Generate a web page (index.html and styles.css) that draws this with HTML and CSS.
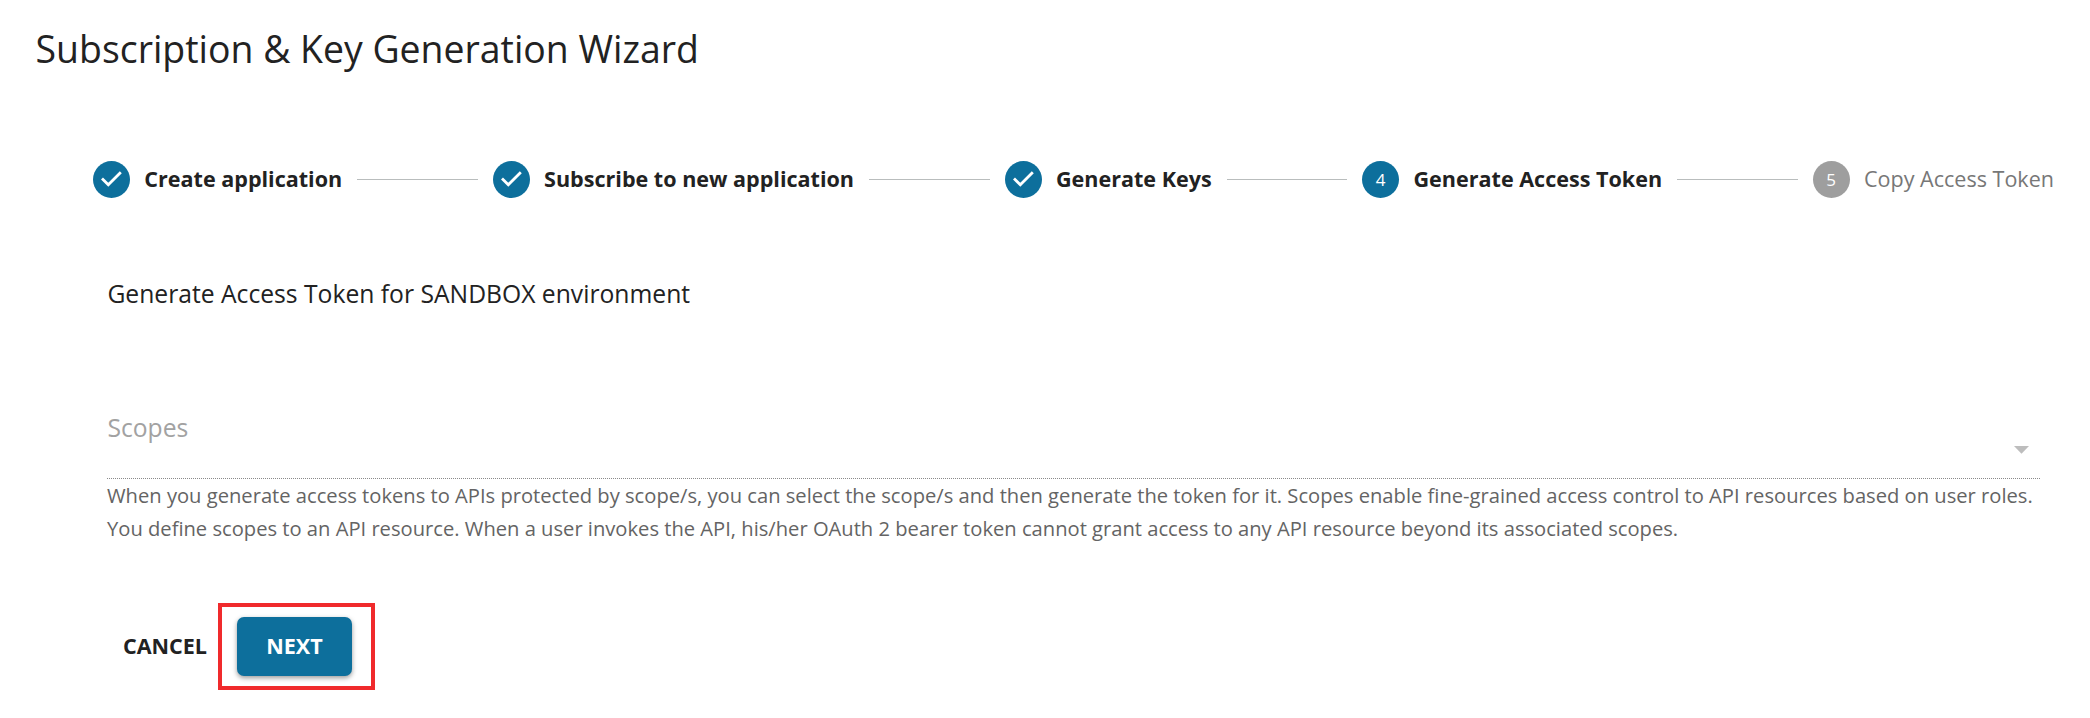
FILE: index.html
```html
<!DOCTYPE html>
<html lang="en">
<head>
<meta charset="utf-8">
<title>Subscription &amp; Key Generation Wizard</title>
<link rel="stylesheet" href="styles.css">
</head>
<body>
<main class="wizard">
  <h1 class="title">Subscription &amp; Key Generation Wizard</h1>
  <div class="stepper">
    <div class="step"><svg class="badge" viewBox="0 0 37 37"><circle cx="18.5" cy="18.5" r="18.5"/><path d="M9 17.4 15.3 23.7 27.8 11.2"/></svg><span class="label">Create application</span></div>
    <div class="connector"></div>
    <div class="step"><svg class="badge" viewBox="0 0 37 37"><circle cx="18.5" cy="18.5" r="18.5"/><path d="M9 17.4 15.3 23.7 27.8 11.2"/></svg><span class="label">Subscribe to new application</span></div>
    <div class="connector"></div>
    <div class="step"><svg class="badge" viewBox="0 0 37 37"><circle cx="18.5" cy="18.5" r="18.5"/><path d="M9 17.4 15.3 23.7 27.8 11.2"/></svg><span class="label">Generate Keys</span></div>
    <div class="connector"></div>
    <div class="step"><span class="badge number">4</span><span class="label">Generate Access Token</span></div>
    <div class="connector"></div>
    <div class="step pending"><span class="badge number">5</span><span class="label">Copy Access Token</span></div>
  </div>
  <section class="content">
    <h2 class="subtitle">Generate Access Token for SANDBOX environment</h2>
    <div class="select">
      <span class="placeholder">Scopes</span>
      <svg class="arrow" viewBox="0 0 16 8"><path d="M0 0h15L7.5 7.7z"/></svg>
    </div>
    <p class="help">When you generate access tokens to APIs protected by scope/s, you can select the scope/s and then generate the token for it. Scopes enable fine-grained access control to API resources based on user roles.<br>You define scopes to an API resource. When a user invokes the API, his/her OAuth 2 bearer token cannot grant access to any API resource beyond its associated scopes.</p>
    <div class="actions">
      <button class="button cancel">CANCEL</button>
      <div class="highlight"><button class="button next">NEXT</button></div>
    </div>
  </section>
</main>
</body>
</html>
```
FILE: styles.css
```css
* { box-sizing: border-box; }
body {
  margin: 0;
  background: #fff;
  color: #222;
  font-family: "Open Sans", sans-serif;
}
.wizard { padding: 24px 36px 0 35px; }
.title {
  margin: 0;
  padding-left: 0.6px;
  font-size: 37.4px;
  font-weight: 400;
  line-height: 50px;
}
.stepper {
  display: flex;
  align-items: center;
  gap: 15px;
  margin-top: 87px;
  padding-left: 58px;
  height: 37px;
}
.step { display: flex; align-items: center; gap: 14px; white-space: nowrap; }
.badge { width: 37px; height: 37px; flex: none; fill: #0d6f9c; }
.badge path { fill: none; stroke: #fff; stroke-width: 2.8; }
.number {
  border-radius: 50%;
  background: #0d6f9c;
  color: #fff;
  font-size: 17px;
  line-height: 37px;
  text-align: center;
}
.label { margin-bottom: 2px; padding-left: 0.3px; font-size: 21.56px; font-weight: 700; line-height: 31px; }
.pending .number { background: #9e9e9e; }
.pending .label { color: #777; font-weight: 400; }
.connector { flex: 1; height: 1px; background: #b9bdbd; }
.content { padding: 0 14px 0 72px; }
.subtitle {
  margin: 77px 0 0;
  padding-left: 0.4px;
  font-size: 24.68px;
  font-weight: 400;
  line-height: 38px;
}
.select {
  display: flex;
  justify-content: space-between;
  margin-top: 96px;
  height: 70px;
  border-bottom: 1px dotted #8a8a8a;
}
.placeholder { padding-left: 0.4px; color: #a2a2a2; font-size: 24.66px; line-height: 37px; }
.arrow { width: 16px; height: 8px; margin: 37px 10px 0 0; fill: #bdbdbd; }
.help {
  margin: 0;
  color: #646464;
  font-size: 20.16px;
  line-height: 33px;
  white-space: nowrap;
}
.actions { display: flex; align-items: center; margin-top: 58px; }
.button {
  border: 0;
  padding: 0 0 2px;
  background: none;
  color: #222;
  font: 700 21.56px/36px "Open Sans", sans-serif;
}
.cancel { width: 111px; padding-left: 5px; text-align: center; }
.highlight { padding: 10px 19px 10px 15px; border: 4px solid #f02a2c; }
.next {
  display: block;
  width: 115px;
  height: 59px;
  border-radius: 7px;
  background: #0d6f9c;
  color: #fff;
  box-shadow: 0 2px 5px rgba(0, 0, 0, .4);
}
```
